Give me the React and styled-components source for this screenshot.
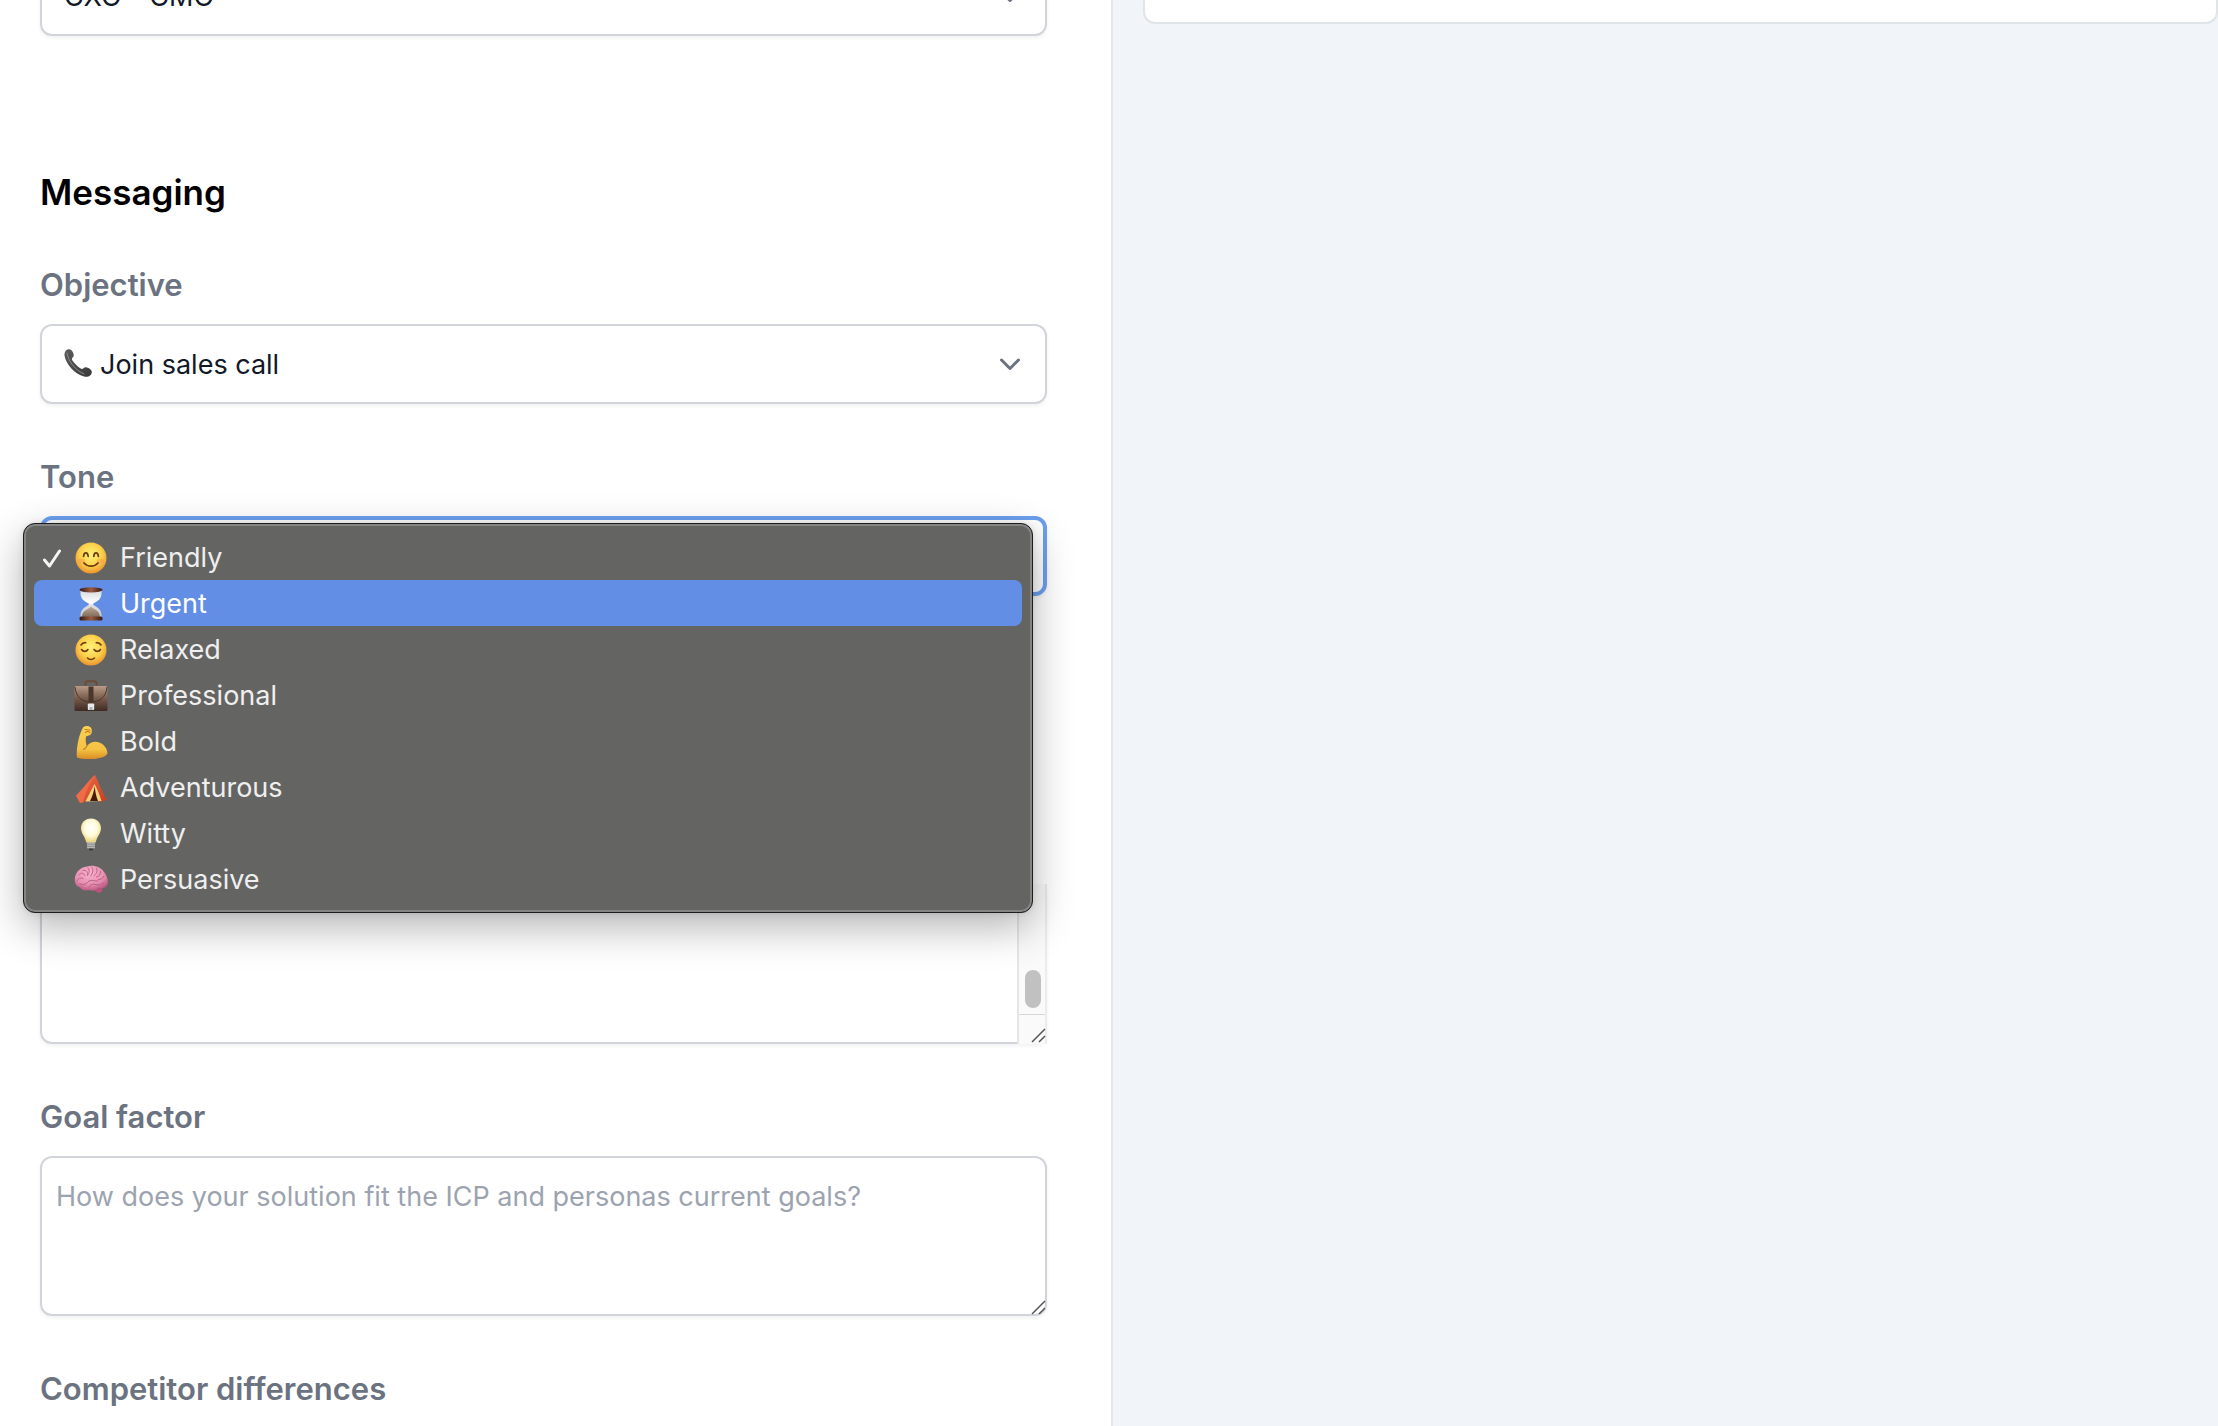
import React from "react";
import styled, { createGlobalStyle } from "styled-components";

const GlobalStyle = createGlobalStyle`
  * {
    box-sizing: border-box;
  }
  body {
    margin: 0;
    overflow: hidden;
    background: #fff;
    font-family: Inter, "Liberation Sans", sans-serif;
  }
`;

const Page = styled.div`
  display: grid;
  grid-template-columns: 1113fr 1105fr;
  height: 100vh;
  overflow: hidden;
`;

const FormPanel = styled.main`
  overflow: hidden;
  padding: 0 64px 0 40px;
  border-right: 2px solid #e5e7eb;
  background: #fff;
`;

const PreviewPanel = styled.aside`
  overflow: hidden;
  padding-left: 30px;
  background: #f1f5fa;
`;

const PreviewCard = styled.div`
  height: 24px;
  border: 2px solid #e0e5ea;
  border-top: 0;
  border-radius: 0 0 12px 12px;
  background: #fff;
`;

/* the form is scrolled so that the first select is cut by the top edge */
const Form = styled.form`
  display: flex;
  flex-direction: column;
  gap: 128px;
  margin-top: -44px;
`;

const Section = styled.section`
  display: flex;
  flex-direction: column;
  gap: 48px;
  padding-top: ${(props) => (props.$offset ? "160px" : "0")};
`;

const Heading = styled.h2`
  margin: 0 0 -8px;
  color: #000;
  font-size: 35px;
  font-weight: 600;
  line-height: 56px;
`;

const Label = styled.label`
  display: block;
  margin-bottom: 14px;
  color: #6b7280;
  font-size: 31px;
  font-weight: 600;
  line-height: 50px;
`;

const Control = styled.div`
  position: relative;
`;

const Select = styled.select`
  display: block;
  width: 100%;
  height: 80px;
  padding: 0 72px 0 ${(props) => (props.$icon ? "58px" : "22px")};
  border: ${(props) => (props.$focused ? "4px solid #6ba0f0" : "2px solid #d1d5db")};
  border-radius: 12px;
  outline: none;
  background: #fff;
  box-shadow: 0 2px 4px rgba(0, 0, 0, 0.06);
  color: #111827;
  font-family: inherit;
  font-size: 27px;
  appearance: none;
`;

const TextArea = styled.textarea`
  display: block;
  width: 100%;
  height: 160px;
  padding: 19px 14px;
  border: 2px solid #d1d5db;
  border-radius: 12px;
  outline: none;
  background: #fff;
  box-shadow: 0 2px 4px rgba(0, 0, 0, 0.06);
  color: #111827;
  font-family: inherit;
  font-size: 27px;
  line-height: 40px;
  overflow: hidden;
  resize: none;

  &::placeholder {
    color: #9ca3af;
    opacity: 1;
  }
`;

const ChevronIcon = styled.svg`
  position: absolute;
  top: 25px;
  right: 22px;
  width: 30px;
  height: 30px;
  pointer-events: none;
`;

const PhoneIcon = styled.svg`
  position: absolute;
  top: 24px;
  left: 23px;
  width: 30px;
  height: 30px;
  pointer-events: none;
`;

const GripIcon = styled.svg`
  position: absolute;
  right: 1px;
  bottom: 1px;
  width: 16px;
  height: 16px;
  pointer-events: none;
`;

const ScrollTrack = styled.div`
  position: absolute;
  top: 0;
  right: 0;
  bottom: 0;
  display: flex;
  flex-direction: column;
  width: 30px;
  border-right: 2px solid #ececec;
  border-left: 2px solid #e6e6e6;
  background: #fafafa;
`;

const ScrollThumb = styled.div`
  width: 16px;
  height: 38px;
  margin: auto 4px 6px 6px;
  border-radius: 8px;
  background: #c1c1c1;
`;

const ScrollCorner = styled.div`
  height: 30px;
  border-top: 1px solid #d6d6d6;
`;

const Menu = styled.ul`
  position: absolute;
  z-index: 1;
  top: 7px;
  right: 14px;
  left: -17px;
  margin: 0;
  padding: 10px;
  border: 1px solid #1d1d1d;
  border-radius: 12px;
  background: #646563;
  box-shadow: inset 0 0 0 2px #858684, 0 14px 42px rgba(0, 0, 0, 0.3), 0 0 6px rgba(0, 0, 0, 0.1);
  list-style: none;
`;

const MenuItem = styled.li`
  display: grid;
  grid-template-columns: 20px 34px auto;
  align-items: center;
  column-gap: 12px;
  height: 46px;
  padding: 1px 0 0 8px;
  border-radius: 8px;
  background: ${(props) => (props.$active ? "#628ee6" : "transparent")};
  color: ${(props) => (props.$active ? "#fff" : "#efefef")};
  font-size: 27px;
`;

const EmojiIcon = styled.svg`
  width: 34px;
  height: 34px;
`;

const CheckIcon = styled.svg`
  width: 20px;
  height: 20px;
`;

const Gradients = styled.svg`
  position: absolute;
  width: 0;
  height: 0;
`;

const EmojiGradients = () => (
  <Gradients aria-hidden="true">
    <defs>
      <radialGradient id="face" cx="0.5" cy="0.4" r="0.6">
        <stop offset="0" stopColor="#fff27a" />
        <stop offset="0.6" stopColor="#fbd04a" />
        <stop offset="1" stopColor="#ec942f" />
      </radialGradient>
      <linearGradient id="glass" x1="0" y1="0" x2="0" y2="1">
        <stop offset="0" stopColor="#d2d5da" />
        <stop offset="0.45" stopColor="#ffffff" />
        <stop offset="0.55" stopColor="#dedede" />
        <stop offset="1" stopColor="#c2c2c2" />
      </linearGradient>
      <linearGradient id="sand" x1="0" y1="0" x2="0" y2="1">
        <stop offset="0" stopColor="#b9a796" />
        <stop offset="1" stopColor="#806a58" />
      </linearGradient>
      <linearGradient id="wood" x1="0" y1="0" x2="1" y2="0">
        <stop offset="0" stopColor="#36180f" />
        <stop offset="0.5" stopColor="#9a5c42" />
        <stop offset="1" stopColor="#36180f" />
      </linearGradient>
      <linearGradient id="leather" x1="0" y1="0" x2="0" y2="1">
        <stop offset="0" stopColor="#b89c88" />
        <stop offset="0.5" stopColor="#775b4c" />
        <stop offset="1" stopColor="#3e2a22" />
      </linearGradient>
      <linearGradient id="arm" x1="0" y1="0" x2="0" y2="1">
        <stop offset="0" stopColor="#fbd052" />
        <stop offset="0.7" stopColor="#f6c344" />
        <stop offset="1" stopColor="#d98e25" />
      </linearGradient>
      <linearGradient id="canvas" x1="0" y1="0" x2="1" y2="1">
        <stop offset="0" stopColor="#f0704a" />
        <stop offset="1" stopColor="#c93a22" />
      </linearGradient>
      <radialGradient id="bulb" cx="0.5" cy="0.4" r="0.6">
        <stop offset="0" stopColor="#ffffff" />
        <stop offset="0.55" stopColor="#fffbd8" />
        <stop offset="1" stopColor="#ecd077" />
      </radialGradient>
      <radialGradient id="brain" cx="0.45" cy="0.3" r="0.75">
        <stop offset="0" stopColor="#f9b3cb" />
        <stop offset="0.6" stopColor="#e68fb0" />
        <stop offset="1" stopColor="#b64d7a" />
      </radialGradient>
      <linearGradient id="handset" x1="0" y1="0" x2="1" y2="1">
        <stop offset="0" stopColor="#5c5c5c" />
        <stop offset="1" stopColor="#383838" />
      </linearGradient>
    </defs>
  </Gradients>
);

const emojis = {
  smile: (
    <>
      <circle cx="17" cy="17" r="15.5" fill="url(#face)" />
      <ellipse cx="7.6" cy="20" rx="3.6" ry="2.6" fill="#f79a4c" opacity="0.45" />
      <ellipse cx="26.4" cy="20" rx="3.6" ry="2.6" fill="#f79a4c" opacity="0.45" />
      <g fill="none" stroke="#6f3c12" strokeWidth="1.7" strokeLinecap="round">
        <path d="M9.6 15.4c.3-4.8 4.2-4.8 4.6 0" />
        <path d="M19.8 15.4c.3-4.8 4.2-4.8 4.6 0" />
        <path d="M10 22c3.5 4.2 10.5 4.2 14 0" />
      </g>
    </>
  ),
  hourglass: (
    <>
      <path d="M6.5 2h21v4c0 5.5-3.2 8-8.2 10.5V18c5 2.5 8.2 5 8.2 10.5v4h-21v-4c0-5.5 3.2-8 8.2-10.5v-1.5C9.7 14 6.5 11.5 6.5 6z" fill="url(#glass)" />
      <path d="M16.4 20h1.2c1.2 2 8.4 3 8.4 10H8c0-7 7.2-8 8.4-10z" fill="url(#sand)" />
      <ellipse cx="17" cy="2.8" rx="11.5" ry="2.6" fill="url(#wood)" />
      <rect x="5.5" y="29.6" width="23" height="4" rx="1.6" fill="url(#wood)" />
    </>
  ),
  relieved: (
    <>
      <circle cx="17" cy="17" r="15.5" fill="url(#face)" />
      <g fill="none" stroke="#6f3c12" strokeWidth="1.6" strokeLinecap="round">
        <path d="M7.5 16.5c1.5 2.5 5 2.5 6.4 0" />
        <path d="M20.1 16.5c1.5 2.5 5 2.5 6.4 0" />
        <path d="M7 12c1-1.6 2.8-2.5 4.8-2.3" />
        <path d="M27 12c-1-1.6-2.8-2.5-4.8-2.3" />
        <path d="M13.5 25c1.8 2 5.2 2 7 0" />
      </g>
    </>
  ),
  briefcase: (
    <>
      <path d="M11.5 6.5V4.2c0-1.4.8-2 2-2h7c1.2 0 2 .6 2 2v2.3" fill="none" stroke="#6b4a38" strokeWidth="2" />
      <rect x="0.5" y="7" width="33" height="25" rx="1.5" fill="url(#leather)" />
      <path d="M1 8c1 11 8 15 16 15s15-4 16-15" fill="none" stroke="#4a3429" strokeWidth="1" />
      <rect x="14.5" y="7.5" width="5" height="16" fill="#4b362b" />
      <rect x="13.8" y="24.5" width="6.4" height="6.5" rx="1" fill="#e6ebee" />
      <rect x="15.5" y="28" width="3" height="3" fill="#aab2b8" />
    </>
  ),
  arm: (
    <>
      <path d="M9 2.5c2.5-2 6-2 8 .2 1 1.5 1.2 4.4.2 6.3-1.3 1.8-3.6 1.5-5.2 2.4-.8 3 0 7 .8 9.8 3.5-4.5 8.5-5.2 13-3.5 4.5 1.9 7.5 6.3 7.7 10.5-1.5 4-10 6-17.5 5.8-5.5 0-10.5-.5-13-1.5C2 27 4 11 9 2.5z" fill="url(#arm)" />
      <path d="M12.8 21.2c-.8 1.6-1.8 2.6-3.3 3.2M11 4.5l5 .8M11.3 7.6c2-1.8 3.6-1.2 4.8.2" fill="none" stroke="#bd7d22" strokeWidth="1.1" strokeLinecap="round" />
    </>
  ),
  tent: (
    <>
      <path d="M21 4c3 6 7 17 12 25l-5 1.5-13-1L6 32l-4-7.5C9 18 15 9 21 4z" fill="url(#canvas)" />
      <path d="M21 4.5c-6 8-10 18-12 27L6 32l-4-7.5C9 18 15 9 21 4z" fill="#ef6c49" />
      <path d="M20.5 13c3 5 5 11 7 17l-16 .5c3-6 6-12 9-17.5z" fill="#f3d27a" />
      <path d="M20.8 15c.2 5 1.5 11 3.2 15h-8c2.5-4.5 4-10 4.8-15z" fill="#4a170f" />
    </>
  ),
  bulb: (
    <>
      <path d="M17 1.5c6 0 10 4.4 10 9.8 0 5.4-4 7.7-5.2 14.2h-9.6C11 19 7 16.700 7 11.3 7 5.9 11 1.5 17 1.5z" fill="url(#bulb)" />
      <rect x="13" y="25" width="8" height="6.5" rx="1" fill="#b9bab6" />
      <path d="M13 27.2h8M13 29.4h8" stroke="#81827e" strokeWidth="0.8" />
      <path d="M14.5 31.5h5l-1.2 2h-2.6z" fill="#3b3b3b" />
    </>
  ),
  brain: (
    <>
      <path d="M17 23c2 3 5 7.5 9.5 6.5 2-.6 2.3-3 1.6-6z" fill="#b9527d" />
      <path d="M1 19C-.5 12 5 4 13 3.5c6-2 13.5 0 17 5.5 3.5 4 5 10 3 13.5-2.5 3.5-6 3-8.5 2-1.5 2.5-5.5 4.5-9.5 2.5-4 1-7.5 0-9-2.5-2.5-.5-4.6-2.5-5-5.5z" fill="url(#brain)" />
      <g fill="none" stroke="#bd6089" strokeWidth="1" strokeLinecap="round">
        <path d="M3 18c1-3 3.5-3.5 6-2.5M5 12c2-3 5-2 6 .5M9 7.5c3-.8 5 1 4.5 4M14 5c2 2.5 1.5 5-.5 7.5M18 4.5c2 3 .5 6-1.5 8.5M22.5 5.5c1.5 3-.5 6-2.5 7M26.5 8.5c0 3-1.5 5-4 5.5M30 13c-1 2.5-3 3.5-5.5 3.5" />
        <path d="M6 21c4 1.5 7-.5 9-3 3-1.5 6 .5 9 0M15 24c1-2.5 4-3.5 7-2.5 3 1 6 0 8-1.5" />
      </g>
    </>
  ),
};

const tones = [
  { icon: "smile", label: "Friendly" },
  { icon: "hourglass", label: "Urgent" },
  { icon: "relieved", label: "Relaxed" },
  { icon: "briefcase", label: "Professional" },
  { icon: "arm", label: "Bold" },
  { icon: "tent", label: "Adventurous" },
  { icon: "bulb", label: "Witty" },
  { icon: "brain", label: "Persuasive" },
];

const Chevron = () => (
  <ChevronIcon viewBox="0 0 30 30" aria-hidden="true">
    <path d="M6.5 11l8.5 8.5 8.5-8.5" fill="none" stroke="#6b7280" strokeWidth="3" strokeLinecap="round" strokeLinejoin="round" />
  </ChevronIcon>
);

const Grip = () => (
  <GripIcon viewBox="0 0 16 16" aria-hidden="true">
    <path d="M2 15L15 2M9 15l6-6" fill="none" stroke="#555" strokeWidth="1.5" />
  </GripIcon>
);

const ToneMenu = ({ selected, active }) => (
  <Menu role="listbox" aria-label="Tone">
    {tones.map((tone) => (
      <MenuItem
        key={tone.label}
        role="option"
        aria-selected={tone.label === selected}
        $active={tone.label === active}
      >
        <CheckIcon viewBox="0 0 20 20" aria-hidden="true">
          {tone.label === selected && (
            <path d="M2.5 12l5 6 10-15" fill="none" stroke="#f4f4f4" strokeWidth="3" strokeLinecap="round" strokeLinejoin="round" />
          )}
        </CheckIcon>
        <EmojiIcon viewBox="0 0 34 34" aria-hidden="true">
          {emojis[tone.icon]}
        </EmojiIcon>
        <span>{tone.label}</span>
      </MenuItem>
    ))}
  </Menu>
);

const App = () => {
  return (
    <>
      <GlobalStyle />
      <EmojiGradients />
      <Page>
        <FormPanel>
          <Form>
            <Section>
              <Control>
                <Select aria-label="Persona" defaultValue="cmo">
                  <option value="cmo">CXO - CMO</option>
                </Select>
                <Chevron />
              </Control>
            </Section>

            <Section>
              <Heading>Messaging</Heading>
              <div>
                <Label htmlFor="objective">Objective</Label>
                <Control>
                  <Select id="objective" defaultValue="call" $icon>
                    <option value="call">Join sales call</option>
                  </Select>
                  <PhoneIcon viewBox="0 0 30 30" aria-hidden="true">
                    <path d="M4.5 1.5C7 .8 8.8 2 10 4.5c1 2.3 1.2 4-.8 5.5-.8 1.3 0 2.6 2 4.8 2.5 2.8 4.8 5 7 6 1.3.6 2.2-.4 3.3-1.3 1.5-.8 3.5 0 5.5 1.5 2 1.7 2.5 3.5 1 5.5-1.5 2-4 2.8-7 2C12 26 3 16.5 1.5 7.5 1.2 4.5 2.5 2.2 4.5 1.5z" fill="url(#handset)" />
                    <path d="M4 5c1 8 8 17 17 21" fill="none" stroke="#8b8b8b" strokeWidth="1" strokeLinecap="round" />
                  </PhoneIcon>
                  <Chevron />
                </Control>
              </div>
              <div>
                <Label htmlFor="tone">Tone</Label>
                <Control>
                  <Select id="tone" defaultValue="Friendly" $focused>
                    {tones.map((tone) => (
                      <option key={tone.label}>{tone.label}</option>
                    ))}
                  </Select>
                  <ToneMenu selected="Friendly" active="Urgent" />
                </Control>
              </div>
            </Section>

            <Section $offset>
              <Control>
                <TextArea aria-label="Value proposition" />
                <ScrollTrack>
                  <ScrollThumb />
                  <ScrollCorner />
                </ScrollTrack>
                <Grip />
              </Control>
              <div>
                <Label htmlFor="goal">Goal factor</Label>
                <Control>
                  <TextArea
                    id="goal"
                    placeholder="How does your solution fit the ICP and personas current goals?"
                  />
                  <Grip />
                </Control>
              </div>
              <div>
                <Label htmlFor="competitors">Competitor differences</Label>
                <Control>
                  <TextArea id="competitors" />
                </Control>
              </div>
            </Section>
          </Form>
        </FormPanel>
        <PreviewPanel>
          <PreviewCard />
        </PreviewPanel>
      </Page>
    </>
  );
};

export default App;
